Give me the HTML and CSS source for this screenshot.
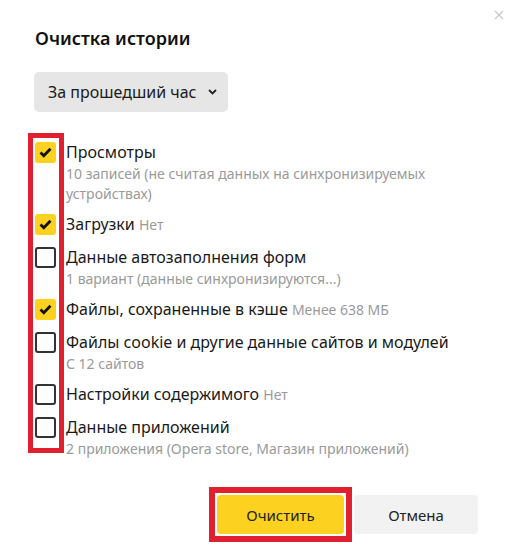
FILE: index.html
```html
<!DOCTYPE html>
<html lang="ru">
<head>
<meta charset="utf-8">
<title>Очистка истории</title>
<link rel="stylesheet" href="styles.css">
</head>
<body>
<div class="dialog">
  <svg class="close" width="10" height="10" viewBox="0 0 10 10"><path d="M1 1L9 9M9 1L1 9" stroke="#c8c8c8" stroke-width="1.3" fill="none"/></svg>
  <h1 class="title">Очистка истории</h1>
  <button class="select">За прошедший час
    <svg class="chev" width="9" height="6" viewBox="0 0 9 6"><path d="M1 1L4.5 4.5L8 1" stroke="#222" stroke-width="1.8" fill="none"/></svg>
  </button>
  <div class="list">
    <div class="mark"></div>
    <div class="item">
      <span class="box on"><svg width="13" height="11" viewBox="0 0 13 11"><path d="M1.5 5.5L4.8 8.7L11.5 1.8" stroke="#111" stroke-width="2.8" fill="none"/></svg></span>
      <div class="text">
        <div class="name">Просмотры</div>
        <div class="sub">10 записей (не считая данных на синхронизируемых устройствах)</div>
      </div>
    </div>
    <div class="item">
      <span class="box on"><svg width="13" height="11" viewBox="0 0 13 11"><path d="M1.5 5.5L4.8 8.7L11.5 1.8" stroke="#111" stroke-width="2.8" fill="none"/></svg></span>
      <div class="text">
        <div class="name">Загрузки <span class="note">Нет</span></div>
      </div>
    </div>
    <div class="item">
      <span class="box"></span>
      <div class="text">
        <div class="name">Данные автозаполнения форм</div>
        <div class="sub">1 вариант (данные синхронизируются...)</div>
      </div>
    </div>
    <div class="item">
      <span class="box on"><svg width="13" height="11" viewBox="0 0 13 11"><path d="M1.5 5.5L4.8 8.7L11.5 1.8" stroke="#111" stroke-width="2.8" fill="none"/></svg></span>
      <div class="text">
        <div class="name">Файлы, сохраненные в кэше <span class="note">Менее 638 МБ</span></div>
      </div>
    </div>
    <div class="item">
      <span class="box"></span>
      <div class="text">
        <div class="name">Файлы cookie и другие данные сайтов и модулей</div>
        <div class="sub">С 12 сайтов</div>
      </div>
    </div>
    <div class="item">
      <span class="box"></span>
      <div class="text">
        <div class="name">Настройки содержимого <span class="note">Нет</span></div>
      </div>
    </div>
    <div class="item">
      <span class="box"></span>
      <div class="text">
        <div class="name">Данные приложений</div>
        <div class="sub">2 приложения (Opera store, Магазин приложений)</div>
      </div>
    </div>
  </div>
  <div class="actions">
    <div class="highlight"><button class="btn primary">Очистить</button></div>
    <button class="btn secondary">Отмена</button>
  </div>
</div>
</body>
</html>
```
FILE: styles.css
```css
* { box-sizing: border-box; }
html, body { margin: 0; background: #fff; }
body {
  font-family: "Noto Sans", "Open Sans", sans-serif;
  color: #1a1a1a;
}
.dialog {
  position: relative;
  width: 514px;
  height: 545px;
  padding: 25px 36px 0 35px;
  display: flex;
  flex-direction: column;
}
.close {
  position: absolute;
  top: 10px;
  right: 10px;
}
.title {
  margin: 0;
  font-size: 18px;
  font-weight: 600;
  line-height: 26px;
  color: #111;
}
.select {
  margin-top: 21px;
  margin-left: -1px;
  align-self: flex-start;
  height: 40px;
  width: 194px;
  border: none;
  border-radius: 5px;
  background: #e6e6e6;
  font-family: inherit;
  font-size: 16px;
  color: #1a1a1a;
  padding: 0 0 0 14px;
  display: flex;
  align-items: center;
  gap: 12px;
}
.list {
  position: relative;
  margin-top: 28px;
  display: flex;
  flex-direction: column;
  gap: 8px;
}
.mark {
  position: absolute;
  left: -7px;
  top: -7px;
  width: 36px;
  height: 320px;
  border: 5px solid #e0202f;
}
.item {
  display: flex;
  gap: 10px;
}
.box {
  flex: none;
  width: 21px;
  height: 21px;
  margin-top: 2px;
  border: 2px solid #333;
  border-radius: 3px;
  display: flex;
  align-items: center;
  justify-content: center;
}
.box.on {
  border: none;
  background: #fdd120;
}
.name {
  font-size: 16px;
  line-height: 24px;
}
.note, .sub {
  font-size: 14px;
  color: #9a9a9a;
}
.sub {
  line-height: 20px;
}
.actions {
  margin-top: auto;
  margin-bottom: 3px;
  display: flex;
  justify-content: flex-end;
  align-items: center;
  gap: 2px;
}
.highlight {
  border: 6px solid #e0202f;
  padding: 2px;
  display: flex;
}
.btn {
  height: 39px;
  border: none;
  border-radius: 4px;
  font-family: inherit;
  font-size: 15px;
  color: #222;
}
.primary {
  width: 127px;
  background: #fdd120;
}
.secondary {
  width: 124px;
  background: #f2f2f2;
}
```
